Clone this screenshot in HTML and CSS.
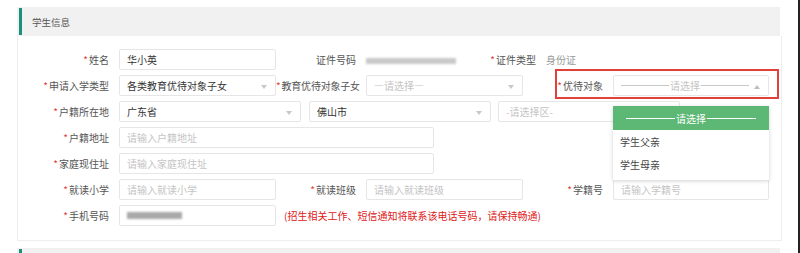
FILE: index.html
```html
<!DOCTYPE html>
<html lang="zh">
<head>
<meta charset="utf-8">
<title>学生信息</title>
<link rel="stylesheet" href="styles.css">
</head>
<body>
<div class="page">
  <section class="panel">
    <div class="panel-head"><span class="panel-title">学生信息</span></div>
    <div class="card">
      <div class="row">
        <div class="field"><label class="lbl w1"><i>*</i>姓名</label><div class="ctl w157 filled">华小英</div></div>
        <div class="field"><label class="lbl w2">证件号码</label><div class="value"><span class="blur id"></span></div></div>
        <div class="field"><label class="lbl w3"><i>*</i>证件类型</label><div class="value muted">身份证</div></div>
      </div>
      <div class="row">
        <div class="field"><label class="lbl w1"><i>*</i>申请入学类型</label><div class="ctl w157 filled sel">各类教育优待对象子女<span class="caret"></span></div></div>
        <div class="field"><label class="lbl w2 tight"><i>*</i>教育优待对象子女</label><div class="ctl w157 ph sel">—请选择—<span class="caret"></span></div></div>
        <div class="field hl">
          <label class="lbl w3"><i>*</i>优待对象</label>
          <div class="ctl w156 ph sel center"><span class="line"></span>请选择<span class="line"></span><span class="caret up"></span></div>
          <div class="dropdown">
            <div class="dd-head"><span class="wline"></span>请选择<span class="wline"></span></div>
            <div class="dd-item">学生父亲</div>
            <div class="dd-item">学生母亲</div>
          </div>
        </div>
      </div>
      <div class="row">
        <div class="field"><label class="lbl w1"><i>*</i>户籍所在地</label><div class="ctl w182 filled sel">广东省<span class="caret"></span></div></div>
        <div class="ctl w182 filled sel gap8">佛山市<span class="caret"></span></div>
        <div class="ctl w182 ph gap7">-请选择区-</div>
      </div>
      <div class="row">
        <div class="field"><label class="lbl w1"><i>*</i>户籍地址</label><div class="ctl w315 ph">请输入户籍地址</div></div>
      </div>
      <div class="row">
        <div class="field"><label class="lbl w1"><i>*</i>家庭现住址</label><div class="ctl w315 ph">请输入家庭现住址</div></div>
      </div>
      <div class="row">
        <div class="field"><label class="lbl w1"><i>*</i>就读小学</label><div class="ctl w157 ph">请输入就读小学</div></div>
        <div class="field"><label class="lbl w2"><i>*</i>就读班级</label><div class="ctl w157 ph">请输入就读班级</div></div>
        <div class="field"><label class="lbl w3"><i>*</i>学籍号</label><div class="ctl w156 ph">请输入学籍号</div></div>
      </div>
      <div class="row">
        <div class="field"><label class="lbl w1"><i>*</i>手机号码</label><div class="ctl w157 filled"><span class="blur phone"></span></div></div>
        <div class="notice">(招生相关工作、短信通知将联系该电话号码，请保持畅通)</div>
      </div>
    </div>
  </section>
  <section class="panel next">
    <div class="panel-head"></div>
  </section>
</div>
</body>
</html>
```
FILE: styles.css
```css
* { box-sizing: border-box; }
html, body { margin: 0; padding: 0; background: #fff; }
body {
  font-family: "Noto Sans CJK SC", "Noto Sans", sans-serif;
  font-size: 10px;
  color: #444;
}
.page {
  width: 800px;
  height: 253px;
  overflow: hidden;
  border-right: 2px solid #222;
  padding: 7px 0 0 17px;
}
.panel { width: 765px; }
.panel-head {
  height: 29px;
  background: #f1f1f1;
  position: relative;
  display: flex;
  align-items: center;
  padding-left: 15px;
  margin-right: 2px;
}
.panel-head::before {
  content: "";
  position: absolute;
  left: 2px;
  top: 1px;
  bottom: 1px;
  width: 3px;
  background: #1b8f7a;
}
.panel-title { color: #555; font-size: 9.5px; }
.card {
  border: 1px solid #eeeeee;
  border-top: none;
  padding: 13px 0 12px 0;
  height: 205px;
  display: flex;
  flex-direction: column;
  gap: 5px;
}
.row {
  display: flex;
  align-items: center;
  height: 21px;
}
.field { display: flex; align-items: center; height: 21px; position: relative; }
.lbl {
  text-align: right;
  padding-right: 10px;
  color: #555;
  white-space: nowrap;
  flex: none;
}
.lbl i { font-style: normal; color: #e0403a; margin-right: 1px; }
.w1 { width: 101px; }
.w2 { width: 90px; }
.w2.tight { padding-right: 8px; letter-spacing: -0.2px; }
.w3 { width: 90px; }
.ctl {
  height: 21px;
  border: 1px solid #e6e6e6;
  border-radius: 2px;
  display: flex;
  align-items: center;
  padding: 0 7px;
  position: relative;
  white-space: nowrap;
  flex: none;
}
.w157 { width: 157px; }
.w156 { width: 156px; }
.w182 { width: 182px; }
.w315 { width: 315px; }
.gap8 { margin-left: 8px; }
.gap7 { margin-left: 7px; }
.filled { color: #333; }
.ph { color: #c4c4c4; }
.sel { padding-right: 18px; }
.caret {
  position: absolute;
  right: 8px;
  top: 9px;
  width: 0; height: 0;
  border-left: 3.5px solid transparent;
  border-right: 3.5px solid transparent;
  border-top: 4px solid #c8c8c8;
}
.caret.up {
  border-top: none;
  border-bottom: 4px solid #bdbdbd;
}
.center { justify-content: center; padding-left: 6px; }
.line {
  flex: 1;
  height: 1px;
  background: #c8c8c8;
  margin: 0 1px;
}
.value { color: #444; padding-left: 0; }
.value.muted { color: #999; }
.blur {
  display: inline-block;
  background: #c9c9c9;
  filter: blur(1.2px);
}
.blur.id { width: 90px; height: 6px; margin-top: 1px; }
.blur.phone { width: 55px; height: 7px; background: #a9a9a9; }
.notice { color: #e02020; margin-left: 8px; white-space: nowrap; }
.hl::after {
  content: "";
  position: absolute;
  left: 32px;
  right: -10px;
  top: -6px;
  bottom: -3px;
  border: 2px solid #e2403c;
  pointer-events: none;
}
.dropdown {
  position: absolute;
  left: 90px;
  top: 31px;
  width: 156px;
  background: #fff;
  box-shadow: 0 1px 4px rgba(0,0,0,0.18);
  z-index: 5;
}
.dd-head {
  height: 24px;
  background: #5cb874;
  color: #fff;
  display: flex;
  align-items: center;
  padding: 0 12px;
}
.wline { flex: 1; height: 1px; background: #fff; margin: 0 1px; }
.dd-item {
  height: 23px;
  display: flex;
  align-items: center;
  padding-left: 7px;
  color: #444;
}
.dd-item:last-child { height: 27px; padding-bottom: 4px; }
.next { margin-top: 7px; }
.next .panel-head { height: 12px; }
```
